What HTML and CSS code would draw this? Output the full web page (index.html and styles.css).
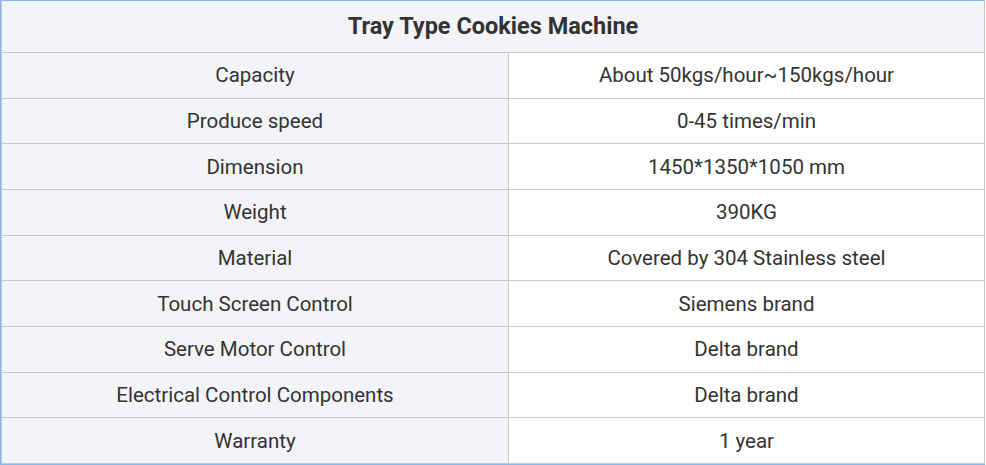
FILE: index.html
```html
<!DOCTYPE html>
<html>
<head>
<meta charset="utf-8">
<link rel="stylesheet" href="styles.css">
</head>
<body>
<div class="frame">
  <div class="spec">
    <div class="head">Tray Type Cookies Machine</div>
    <div class="k">Capacity</div><div class="v">About 50kgs/hour~150kgs/hour</div>
    <div class="k">Produce speed</div><div class="v">0-45 times/min</div>
    <div class="k">Dimension</div><div class="v">1450*1350*1050 mm</div>
    <div class="k">Weight</div><div class="v">390KG</div>
    <div class="k">Material</div><div class="v">Covered by 304 Stainless steel</div>
    <div class="k">Touch Screen Control</div><div class="v">Siemens brand</div>
    <div class="k">Serve Motor Control</div><div class="v">Delta brand</div>
    <div class="k">Electrical Control Components</div><div class="v">Delta brand</div>
    <div class="k">Warranty</div><div class="v">1 year</div>
  </div>
</div>
</body>
</html>
```
FILE: styles.css
```css
html, body {
  margin: 0;
  padding: 0;
  background: #ffffff;
}
.frame {
  width: 985px;
  border-top: 1px solid #86b8ea;
  border-left: 1px solid #86b8ea;
  border-bottom: 1px solid #86b8ea;
  box-sizing: border-box;
}
.spec {
  width: 984px;
  height: 463px;
  box-sizing: border-box;
  border-right: 1px solid #c8c8c8;
  border-left: 1px solid #c8c8c8;
  display: grid;
  grid-template-columns: 507px 1fr;
  grid-template-rows: 52px repeat(9, 1fr);
  font-family: Roboto, "Liberation Sans", sans-serif;
  color: #333333;
}
.spec > div {
  box-sizing: border-box;
  border-bottom: 1px solid #c8c8c8;
  display: flex;
  align-items: center;
  justify-content: center;
  font-size: 20.5px;
}
.spec > .head {
  grid-column: 1 / 3;
  background: #f3f4f8;
  font-weight: 700;
  font-size: 23.5px;
  padding-bottom: 2px;
}
.k {
  background: #f3f4f8;
  border-right: 1px solid #c8c8c8;
}
.v {
  background: #ffffff;
}
```
